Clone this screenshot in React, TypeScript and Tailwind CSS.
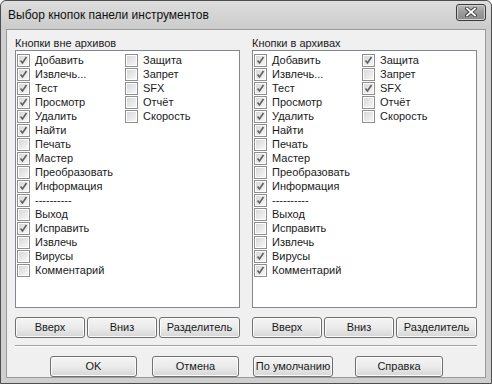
import React from "react"

type Item = { label: string; checked: boolean }

const leftCol1: Item[] = [
  { label: "Добавить", checked: true },
  { label: "Извлечь...", checked: true },
  { label: "Тест", checked: true },
  { label: "Просмотр", checked: true },
  { label: "Удалить", checked: true },
  { label: "Найти", checked: true },
  { label: "Печать", checked: false },
  { label: "Мастер", checked: true },
  { label: "Преобразовать", checked: false },
  { label: "Информация", checked: true },
  { label: "----------", checked: true },
  { label: "Выход", checked: false },
  { label: "Исправить", checked: true },
  { label: "Извлечь", checked: false },
  { label: "Вирусы", checked: false },
  { label: "Комментарий", checked: false },
]

const leftCol2: Item[] = [
  { label: "Защита", checked: false },
  { label: "Запрет", checked: false },
  { label: "SFX", checked: false },
  { label: "Отчёт", checked: false },
  { label: "Скорость", checked: false },
]

const rightCol1: Item[] = [
  { label: "Добавить", checked: true },
  { label: "Извлечь...", checked: true },
  { label: "Тест", checked: true },
  { label: "Просмотр", checked: true },
  { label: "Удалить", checked: true },
  { label: "Найти", checked: true },
  { label: "Печать", checked: false },
  { label: "Мастер", checked: true },
  { label: "Преобразовать", checked: false },
  { label: "Информация", checked: true },
  { label: "----------", checked: true },
  { label: "Выход", checked: false },
  { label: "Исправить", checked: false },
  { label: "Извлечь", checked: false },
  { label: "Вирусы", checked: true },
  { label: "Комментарий", checked: true },
]

const rightCol2: Item[] = [
  { label: "Защита", checked: true },
  { label: "Запрет", checked: false },
  { label: "SFX", checked: true },
  { label: "Отчёт", checked: false },
  { label: "Скорость", checked: false },
]

function CheckBox({ checked }: { checked: boolean }) {
  return (
    <div className="w-[13px] h-[13px] shrink-0 border border-[#8f8f8f] bg-white p-px">
      <div className="w-full h-full bg-gradient-to-br from-[#d8d8d8] to-[#f6f6f6] flex items-center justify-center">
        {checked && (
          <svg width="9" height="9" viewBox="0 0 9 9">
            <path d="M1.5 4.5 L3.5 7 L7.5 1" fill="none" stroke="#606060" strokeWidth="1.6" />
          </svg>
        )}
      </div>
    </div>
  )
}

function Row({ item }: { item: Item }) {
  return (
    <div className="h-[14px] flex items-center gap-[5px]">
      <CheckBox checked={item.checked} />
      <span className="leading-none whitespace-nowrap">{item.label}</span>
    </div>
  )
}

function Btn({ label, className }: { label: string; className: string }) {
  return (
    <div
      className={`h-[21px] flex items-center justify-center rounded-[3px] border border-[#707070] bg-gradient-to-b from-[#f4f4f4] via-[#ebebeb] to-[#d6d6d6] shadow-[inset_0_0_0_1px_#fbfbfb] text-[#1a1a1a] ${className}`}
    >
      {label}
    </div>
  )
}

function Panel({ title, col1, col2 }: { title: string; col1: Item[]; col2: Item[] }) {
  return (
    <div className="w-[225px] flex flex-col">
      <div className="h-[14px] leading-[14px] text-[#1a1a1a]">{title}</div>
      <div className="h-[258px] border border-[#828790] bg-white flex pt-[2px] pl-[1px]">
        <div className="w-[108px] flex flex-col">
          {col1.map((it, i) => (
            <Row key={i} item={it} />
          ))}
        </div>
        <div className="flex flex-col">
          {col2.map((it, i) => (
            <Row key={i} item={it} />
          ))}
        </div>
      </div>
      <div className="flex gap-[2px] mt-[9px]">
        <Btn label="Вверх" className="w-[70px]" />
        <Btn label="Вниз" className="w-[70px]" />
        <Btn label="Разделитель" className="flex-1" />
      </div>
    </div>
  )
}

export default function App() {
  return (
    <div
      className="w-[492px] h-[384px] bg-[#cfcfcf] border border-[#4d4d4d] rounded-t-[6px] flex flex-col text-[11px] text-[#1a1a1a]"
      style={{ fontFamily: '"Liberation Sans", Arial, sans-serif' }}
    >
      <div className="h-[28px] flex items-center justify-between pl-[7px] pr-[5px] bg-gradient-to-b from-[#dedede] to-[#cbcbcb] rounded-t-[6px]">
        <span className="text-[12px] text-[#111]">Выбор кнопок панели инструментов</span>
        <div className="w-[30px] h-[17px] -mt-[6px] rounded-[3px] border border-[#3c3c3c] bg-gradient-to-b from-[#b8b8b8] via-[#9a9a9a] to-[#8a8a8a] shadow-[inset_0_0_0_1px_#d0d0d0] flex items-center justify-center">
          <svg width="12" height="10" viewBox="0 0 12 10">
            <path d="M2 1.5 L10 8.5 M10 1.5 L2 8.5" stroke="#3a3a3a" strokeWidth="3.6" strokeLinecap="square" />
            <path d="M2 1.5 L10 8.5 M10 1.5 L2 8.5" stroke="#ffffff" strokeWidth="1.8" strokeLinecap="square" />
          </svg>
        </div>
      </div>
      <div className="flex-1 mx-[5px] mb-[5px] border border-[#9a9a9a] bg-[#f0f0f0] flex flex-col pt-[6px] px-[8px]">
        <div className="flex gap-[12px]">
          <Panel title="Кнопки вне архивов" col1={leftCol1} col2={leftCol2} />
          <Panel title="Кнопки в архивах" col1={rightCol1} col2={rightCol2} />
        </div>
        <div className="h-[2px] border-t border-[#a0a0a0] border-b border-b-white mt-[7px]" />
        <div className="flex mt-[9px]">
          <Btn label="OK" className="w-[87px] ml-[35px]" />
          <Btn label="Отмена" className="w-[87px] ml-[15px]" />
          <Btn label="По умолчанию" className="w-[80px] ml-[14px]" />
          <Btn label="Справка" className="w-[88px] ml-[22px]" />
        </div>
      </div>
    </div>
  )
}
